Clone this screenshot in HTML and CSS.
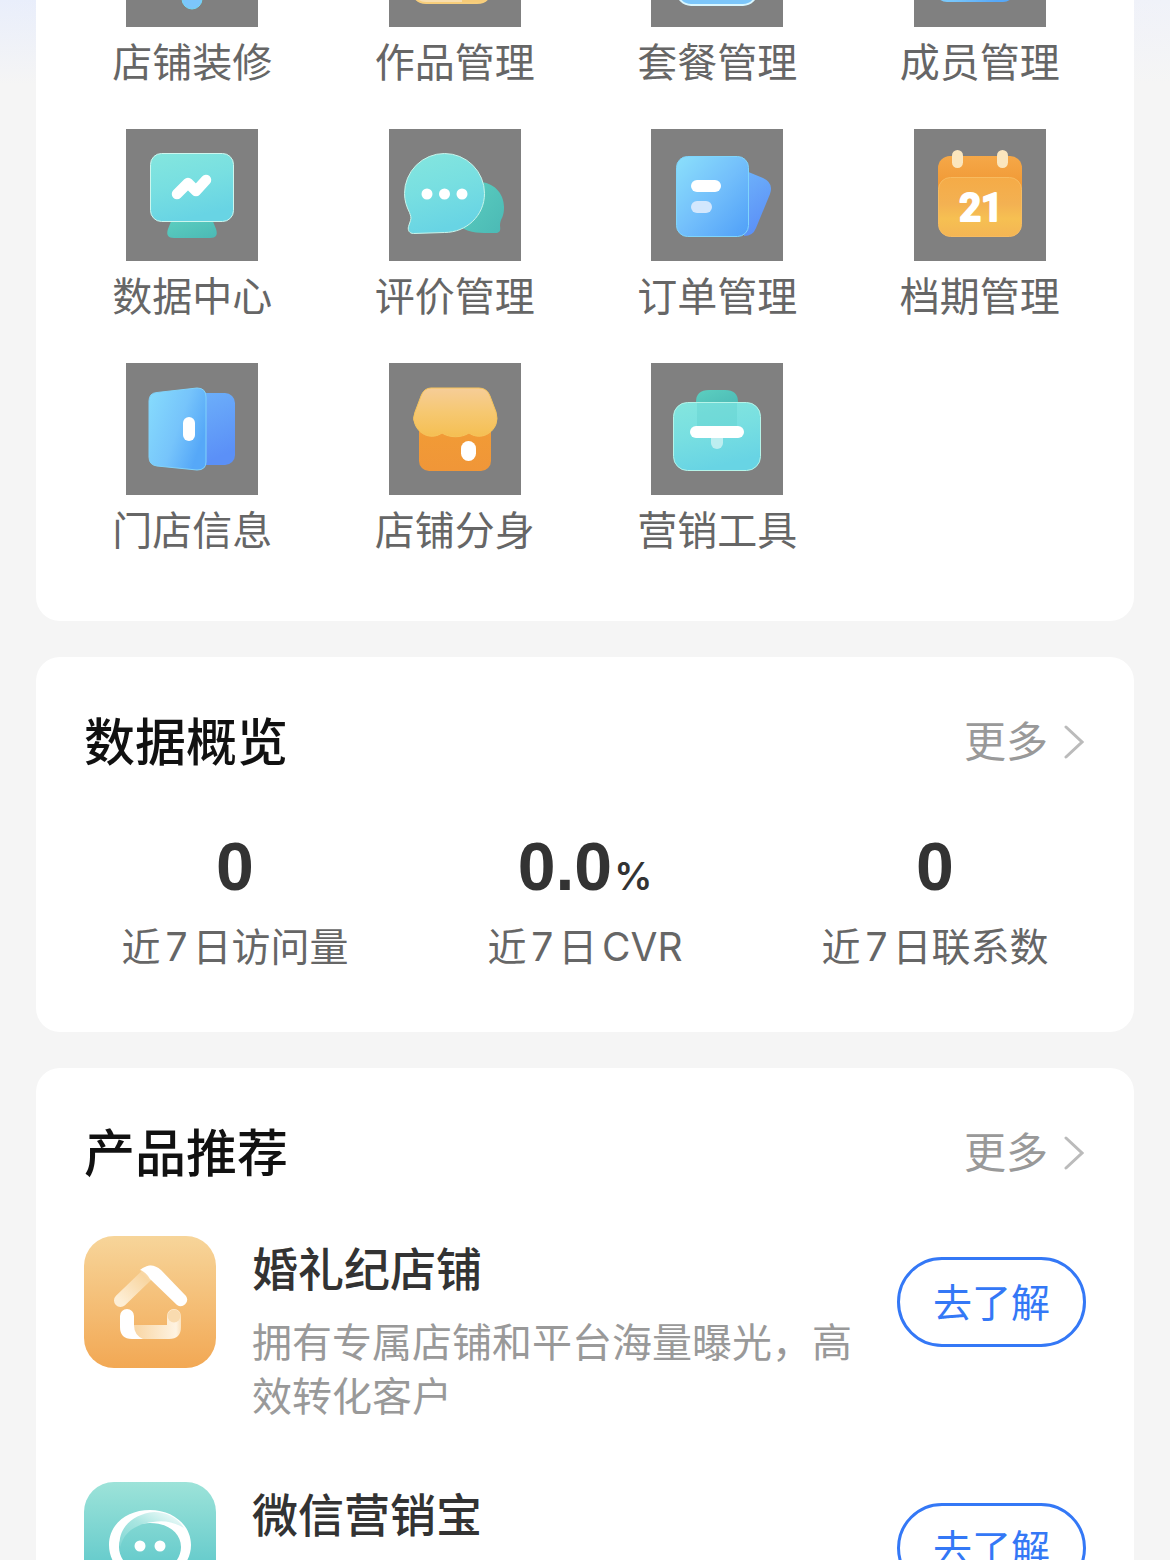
FILE: index.html
```html
<!DOCTYPE html>
<html lang="zh-CN">
<head>
<meta charset="utf-8">
<meta name="viewport" content="width=device-width, initial-scale=1">
<title>店铺</title>
<link rel="stylesheet" href="styles.css">
</head>
<body>
<svg class="defs" width="0" height="0" aria-hidden="true">
  <defs>
    <linearGradient id="aqua" x1="0" y1="0" x2="0.3" y2="1"><stop offset="0" stop-color="#84e6de"/><stop offset="0.5" stop-color="#78dfe1"/><stop offset="1" stop-color="#68d4e4"/></linearGradient>
    <linearGradient id="teal" x1="0" y1="0" x2="1" y2="1"><stop offset="0" stop-color="#5ccfc0"/><stop offset="1" stop-color="#4bb9b5"/></linearGradient>
    <linearGradient id="sky" x1="0" y1="0" x2="1" y2="1"><stop offset="0" stop-color="#8be0fb"/><stop offset="0.5" stop-color="#73bffb"/><stop offset="1" stop-color="#4f9ff8"/></linearGradient>
    <linearGradient id="door" x1="0" y1="0" x2="1" y2="0.5"><stop offset="0" stop-color="#87dcfd"/><stop offset="0.6" stop-color="#76c4fb"/><stop offset="1" stop-color="#56a8f8"/></linearGradient>
    <linearGradient id="blue" x1="0" y1="0" x2="0.3" y2="1"><stop offset="0" stop-color="#6eb2fa"/><stop offset="1" stop-color="#5b90f7"/></linearGradient>
    <linearGradient id="orange" x1="0" y1="0" x2="0" y2="1"><stop offset="0" stop-color="#f5a848"/><stop offset="0.4" stop-color="#f19a36"/><stop offset="1" stop-color="#f09638"/></linearGradient>
    <linearGradient id="amber" x1="0" y1="0" x2="0" y2="1"><stop offset="0" stop-color="#f5ab47"/><stop offset="0.45" stop-color="#f3b152"/><stop offset="0.7" stop-color="#f6c052"/><stop offset="1" stop-color="#f4b554"/></linearGradient>
    <linearGradient id="roof" x1="0" y1="0" x2="0" y2="1"><stop offset="0" stop-color="#f6cd98"/><stop offset="0.5" stop-color="#f6c871"/><stop offset="1" stop-color="#f5bf52"/></linearGradient>
    <linearGradient id="logo-orange" x1="0" y1="0" x2="0" y2="1"><stop offset="0" stop-color="#f7d59a"/><stop offset="1" stop-color="#f2a854"/></linearGradient>
    <linearGradient id="logo-teal" x1="0" y1="0" x2="0" y2="1"><stop offset="0" stop-color="#9de3d9"/><stop offset="1" stop-color="#45bdc4"/></linearGradient>
    <linearGradient id="fade-roof" gradientUnits="userSpaceOnUse" x1="36" y1="64" x2="66" y2="34"><stop offset="0" stop-color="#fdeed5"/><stop offset="0.8" stop-color="#f8d5a0"/><stop offset="1" stop-color="#fbe3be"/></linearGradient>
    <linearGradient id="fade-base" gradientUnits="userSpaceOnUse" x1="48" y1="90" x2="97" y2="90"><stop offset="0" stop-color="#f8d4a0"/><stop offset="0.9" stop-color="#fef3e2"/><stop offset="1" stop-color="#fbe2bd"/></linearGradient>
    <linearGradient id="ring-glow" x1="0" y1="1" x2="1" y2="0"><stop offset="0" stop-color="#7fd6d4"/><stop offset="0.5" stop-color="#a9e6e1"/><stop offset="1" stop-color="#ffffff"/></linearGradient>
  </defs>
</svg>

<main class="screen">
  <nav class="card card--menu" aria-label="店铺管理">
    <a class="entry" href="#">
      <svg class="tile tile--cut" viewBox="0 105 132 27" aria-hidden="true"><rect x="56" y="80" width="20" height="34" rx="10" fill="#7cc6fb" stroke="#74d8f4"/></svg>
      <span class="entry-name">店铺装修</span>
    </a>
    <a class="entry" href="#">
      <svg class="tile tile--cut" viewBox="0 105 132 27" aria-hidden="true"><path d="M24 98h77q-2 10-13 10H37q-11 0-13-10z" fill="#f8deae"/><path d="M73 98h28q-2 10-13 10H73z" fill="#f6cb79"/><path d="M26 103q4 5 11 5h51q8 0 11-5" fill="none" stroke="#f7ce7c" stroke-width="2"/></svg>
      <span class="entry-name">作品管理</span>
    </a>
    <a class="entry" href="#">
      <svg class="tile tile--cut" viewBox="0 105 132 27" aria-hidden="true"><rect x="26" y="50" width="80" height="60" rx="14" fill="#7cc6fa" stroke="#d9f7ff" stroke-width="2"/></svg>
      <span class="entry-name">套餐管理</span>
    </a>
    <a class="entry" href="#">
      <svg class="tile tile--cut" viewBox="0 105 132 27" aria-hidden="true"><rect x="21" y="50" width="80" height="57" rx="12" fill="url(#door)"/></svg>
      <span class="entry-name">成员管理</span>
    </a>

    <a class="entry" href="#">
      <svg class="tile" viewBox="0 0 132 132" aria-hidden="true"><path d="M46 90h40l4 10q3 9-6 9H48q-9 0-6-9z" fill="url(#teal)"/><rect x="24.500" y="24.500" width="83" height="68" rx="11" fill="url(#aqua)" stroke="#cdf6ee"/><path d="M51 65l11-11 8 8 10-11" fill="none" stroke="#fff" stroke-width="10.500" stroke-linecap="round" stroke-linejoin="round"/></svg>
      <span class="entry-name">数据中心</span>
    </a>
    <a class="entry" href="#">
      <svg class="tile" viewBox="0 0 132 132" aria-hidden="true"><path d="M88 53c15-1 27 10 27 25 0 6-1 9-3 13-1 3-1 4-1 6 1 5-1 7-4 7-14 0-28 1-38-8z" fill="url(#teal)"/><path d="M55.500 24.500a40 40 0 0 1 40 40c0 22-18 39-40 39l-31 1c-4 0-6-3-5-7l2-6c1-3 0-5-1-8-3-6-5-12-5-19a40 40 0 0 1 40-40z" fill="url(#aqua)" stroke="#c9f5ec"/><circle cx="38" cy="65" r="5.500" fill="#fff"/><circle cx="55.500" cy="65" r="5.500" fill="#fff"/><circle cx="73" cy="65" r="5.500" fill="#fff"/></svg>
      <span class="entry-name">评价管理</span>
    </a>
    <a class="entry" href="#">
      <svg class="tile" viewBox="0 0 132 132" aria-hidden="true"><path d="M95 42l17 7q11 5 7 16l-14 34q-3 8-12 8z" fill="url(#blue)"/><rect x="25.500" y="27.500" width="72" height="80" rx="11" fill="url(#sky)" stroke="#7fd5fc"/><rect x="40" y="51" width="30" height="12" rx="6" fill="#fff"/><rect x="40" y="72" width="21" height="12" rx="6" fill="#d3e7fd"/></svg>
      <span class="entry-name">订单管理</span>
    </a>
    <a class="entry" href="#">
      <svg class="tile" viewBox="0 0 132 132" aria-hidden="true"><rect x="24" y="27" width="84" height="70" rx="12" fill="url(#orange)"/><rect x="24.500" y="48.500" width="83" height="59" rx="12" fill="url(#amber)" stroke="#f7bb60"/><rect x="38" y="21" width="11" height="18" rx="5.500" fill="#fbe6bd"/><rect x="83" y="21" width="11" height="18" rx="5.500" fill="#fbe6bd"/><text class="calendar-day" x="67" y="92">21</text></svg>
      <span class="entry-name">档期管理</span>
    </a>

    <a class="entry" href="#">
      <svg class="tile" viewBox="0 0 132 132" aria-hidden="true"><rect x="60" y="30" width="49" height="72" rx="10" fill="url(#blue)"/><path d="M31 29.500l40-4.500q9 0 9 9v65q0 8-9 8l-40-4q-8-1-8-9V38q0-8 8-8.500z" fill="url(#door)" stroke="#80d3fb"/><rect x="57" y="54" width="12" height="24" rx="6" fill="#fff"/></svg>
      <span class="entry-name">门店信息</span>
    </a>
    <a class="entry" href="#">
      <svg class="tile" viewBox="0 0 132 132" aria-hidden="true"><rect x="30" y="52" width="72" height="56" rx="10" fill="url(#orange)"/><path d="M42 25h48q8 0 11 8l6 16q2 7 0 12c-4 11-17 16-27 9-8 5-19 5-27 0-10 7-23 2-27-9q-3-5 0-12l6-16q3-8 10-8z" fill="url(#roof)" stroke="#f6c45c"/><rect x="72" y="78" width="15" height="20" rx="7.500" fill="#fff"/></svg>
      <span class="entry-name">店铺分身</span>
    </a>
    <a class="entry" href="#">
      <svg class="tile" viewBox="0 0 132 132" aria-hidden="true"><path d="M45 44v-5q0-12 13-12h16q13 0 13 12v5z" fill="url(#teal)"/><rect x="22.500" y="39.500" width="87" height="68" rx="14" fill="url(#aqua)" stroke="#b5f4e9"/><rect x="46" y="40" width="40" height="28" fill="#5fd0cc" opacity="0.400"/><path d="M60 74h12v6a6 6 0 0 1-12 0z" fill="#bdeef0"/><rect x="39" y="63" width="54" height="12" rx="6" fill="#fff"/></svg>
      <span class="entry-name">营销工具</span>
    </a>
  </nav>

  <section class="card" aria-labelledby="overview-title">
    <header class="card-head">
      <h2 class="card-title" id="overview-title">数据概览</h2>
      <a class="more" href="#">更多<svg class="chevron" viewBox="0 0 20 36" aria-hidden="true"><path d="M2 3l16 15L2 33"/></svg></a>
    </header>
    <dl class="stats">
      <div class="stat"><dt class="stat-name">近7日访问量</dt><dd class="stat-value">0</dd></div>
      <div class="stat"><dt class="stat-name">近7日CVR</dt><dd class="stat-value">0.0<span class="stat-unit">%</span></dd></div>
      <div class="stat"><dt class="stat-name">近7日联系数</dt><dd class="stat-value">0</dd></div>
    </dl>
  </section>

  <section class="card" aria-labelledby="products-title">
    <header class="card-head">
      <h2 class="card-title" id="products-title">产品推荐</h2>
      <a class="more" href="#">更多<svg class="chevron" viewBox="0 0 20 36" aria-hidden="true"><path d="M2 3l16 15L2 33"/></svg></a>
    </header>
    <ul class="products">
      <li class="product">
        <svg class="logo" viewBox="0 0 132 132" aria-hidden="true"><rect width="132" height="132" rx="30" fill="url(#logo-orange)"/><path d="M36.500 64.500L66 36" fill="none" stroke="url(#fade-roof)" stroke-width="13" stroke-linecap="round"/><path d="M56 34q11-9 21 0l25 26a6.500 6.500 0 0 1-9 9L66 43q-4-7-10-9z" fill="#fff"/><path d="M50 89h33V80a7 7 0 0 1 14 0v11q0 12-12 12H50z" fill="url(#fade-base)"/><circle cx="90" cy="80" r="6.500" fill="#f9dbaf"/><path d="M36 80a7 7 0 0 1 14 0v9q0 10 9 14H48q-12 0-12-12z" fill="#fff"/></svg>
        <div class="product-text">
          <h3 class="product-name">婚礼纪店铺</h3>
          <p class="product-desc">拥有专属店铺和平台海量曝光，高效转化客户</p>
        </div>
        <button class="learn" type="button">去了解</button>
      </li>
      <li class="product">
        <svg class="logo" viewBox="0 0 132 132" aria-hidden="true"><rect width="132" height="132" rx="30" fill="url(#logo-teal)"/><path fill-rule="evenodd" fill="#fff" d="M66 28c23 0 41 15 41 35S89 99 66 99 25 84 25 63s18-35 41-35zm0 13c-18 0-31 10-31 24s13 26 31 26 31-12 31-26-13-24-31-24z"/><path d="M36 66c-3-19 12-34 34-36 13 0 24 6 30 16-10-6-20-8-31-6-18 2-30 11-33 26z" fill="url(#ring-glow)"/><circle cx="56" cy="64" r="5.500" fill="#fff"/><circle cx="76" cy="64" r="5.500" fill="#fff"/></svg>
        <div class="product-text">
          <h3 class="product-name">微信营销宝</h3>
        </div>
        <button class="learn" type="button">去了解</button>
      </li>
    </ul>
  </section>
</main>
</body>
</html>
```
FILE: styles.css
```css
* {
  box-sizing: border-box;
}

body {
  margin: 0;
  font-family: Inter, "Noto Sans CJK SC", sans-serif;
  background: #f5f5f5;
  color: #333;
}

h2, h3, p, dl, dd, ul {
  margin: 0;
  padding: 0;
}

a {
  color: inherit;
  text-decoration: none;
}

.defs {
  position: absolute;
}

.screen {
  display: flex;
  flex-direction: column;
  gap: 36px;
  height: 100vh;
  padding: 0 36px;
  overflow-y: auto;
  scrollbar-width: none;
  background: linear-gradient(to bottom, rgba(245, 245, 245, 0), #f5f5f5 84px), linear-gradient(to right, #e9eefb, #f0f2f9);
}

.card {
  flex: none;
  padding: 48px;
  border-radius: 24px;
  background: #fff;
}

/* Menu grid */
.card--menu {
  display: grid;
  grid-template-columns: repeat(4, 1fr);
  row-gap: 39px;
  padding: 0 23px 63px 25px;
  border-radius: 0 0 24px 24px;
}

.entry {
  display: flex;
  flex-direction: column;
  align-items: center;
  gap: 9px;
}

.tile {
  display: block;
  width: 132px;
  height: 132px;
  background: #808080;
}

.tile--cut {
  height: 27px;
}

.calendar-day {
  font-family: Roboto, sans-serif;
  font-size: 38px;
  font-weight: 700;
  text-anchor: middle;
  fill: #fff;
  stroke: #fff;
  stroke-width: 2px;
  stroke-linejoin: round;
}

.entry-name {
  font-size: 40px;
  line-height: 54px;
  color: #666;
}

/* Card header */
.card-head {
  display: flex;
  align-items: center;
  justify-content: space-between;
}

.card-title {
  padding-top: 2px;
  font-size: 51px;
  font-weight: 500;
  line-height: 72px;
  color: #111;
}

.more {
  display: flex;
  align-items: center;
  gap: 16px;
  padding-right: 2px;
  font-size: 42px;
  line-height: 60px;
  color: #999;
}

.chevron {
  width: 20px;
  height: 36px;
  fill: none;
  stroke: #bbb;
  stroke-width: 3px;
  stroke-linecap: round;
}

/* Statistics */
.stats {
  display: grid;
  grid-template-columns: repeat(3, 1fr);
  margin: 47px -24px 0;
  padding-bottom: 10px;
}

.stat {
  display: flex;
  flex-direction: column-reverse;
  justify-content: flex-end;
  align-items: center;
  gap: 14px;
}

.stat-value {
  font-family: "Liberation Sans", sans-serif;
  font-size: 68px;
  font-weight: 700;
  line-height: 80px;
}

.stat-unit {
  margin-left: 2px;
  font-family: Inter, sans-serif;
  font-size: 38px;
  font-weight: 600;
  line-height: 1;
}

.stat-name {
  font-size: 39px;
  line-height: 54px;
  text-autospace: normal;
  color: #666;
}

/* Products */
.products {
  display: flex;
  flex-direction: column;
  gap: 58px;
  margin-top: 46px;
  list-style: none;
}

.product {
  display: flex;
  align-items: flex-start;
  gap: 36px;
}

.logo {
  flex: none;
  width: 132px;
  height: 132px;
}

.product-text {
  display: flex;
  flex: 1;
  flex-direction: column;
  gap: 14px;
}

.product-name {
  font-size: 46px;
  font-weight: 500;
  line-height: 66px;
}

.product-desc {
  font-size: 40px;
  line-height: 54px;
  color: #999;
}

.learn {
  flex: none;
  min-width: 189px;
  height: 90px;
  margin-top: 21px;
  padding: 2px 32px 0;
  border: 3px solid #3478f6;
  border-radius: 45px;
  background: #fff;
  font-family: inherit;
  font-size: 39px;
  line-height: 54px;
  color: #3478f6;
}
```
